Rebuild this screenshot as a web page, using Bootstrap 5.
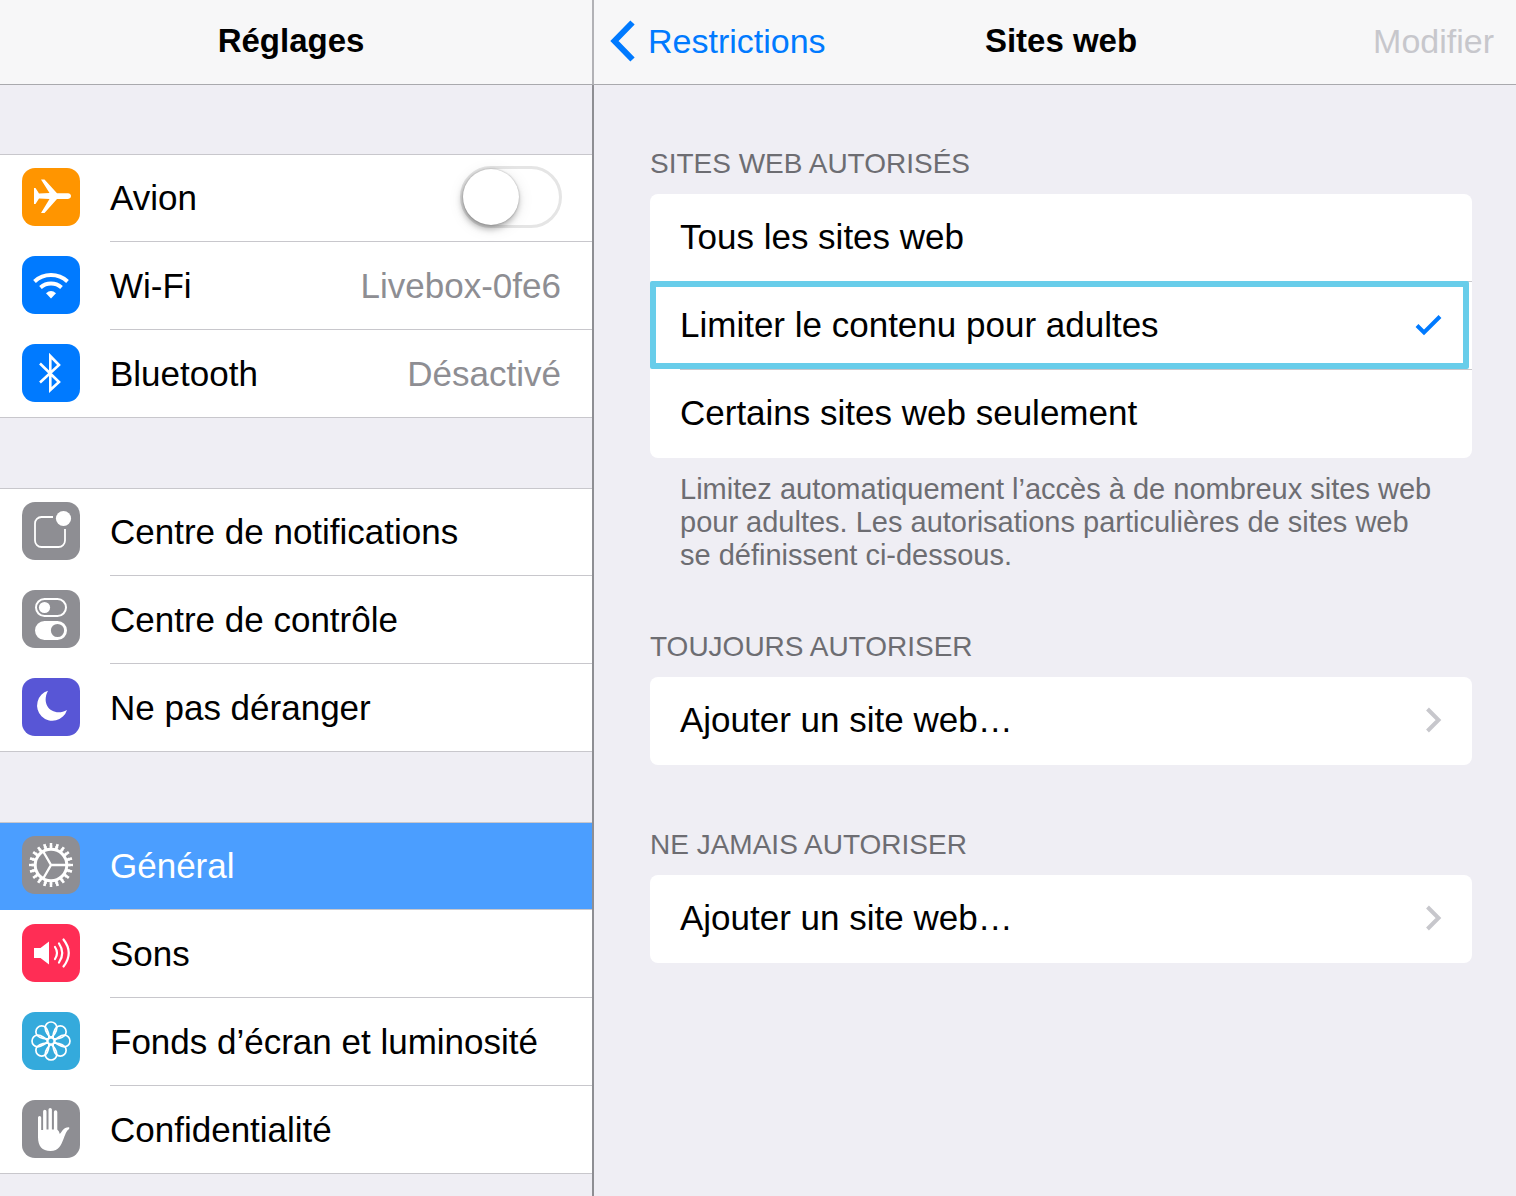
<!DOCTYPE html>
<html lang="fr">
<head>
<meta charset="utf-8">
<meta name="viewport" content="width=device-width, initial-scale=1">
<title>Réglages</title>
<link href="https://cdn.jsdelivr.net/npm/bootstrap@5.3.0/dist/css/bootstrap.min.css" rel="stylesheet">
<style>
  body { font-family: "Liberation Sans", Arial, sans-serif; font-size: 35px; line-height: 40px; color: #000; background: #efeef4; }
  a { text-decoration: none; }
  .split { min-height: 100vh; }
  .master { flex: 0 0 594px; border-right: 2px solid #8e8e93; }
  .topbar { height: 85px; padding-bottom: 3px; font-size: 34px; background: #f7f7f8; border-bottom: 1px solid #a9a9ad; }
  .topbar h1 { font-size: 33px; line-height: 40px; }
  .master .topbar { margin-right: -2px; border-right: 2px solid #b2b2b6; padding-right: 10px; }
  .detail .topbar { padding-left: 34px; padding-right: 22px; }
  .topbar .side { flex: 1 1 0; }
  .side a { color: #007aff; margin-left: -18px; }
  .side button, .side button:disabled { color: #c7c7cc; background: none; border: 0; padding: 0; }

  .groups { padding-top: 69px; gap: 70px; }
  .group { background: #fff; }
  .entry { height: 88px; padding-left: 22px; color: #000; }
  .entry .tile { flex: none; width: 58px; height: 58px; margin: 14px 30px 16px 0; border-radius: 13px; }
  .entry .text { padding: 0 31px 0 0; border-bottom: 1px solid #c8c7cc; }
  .entry:last-child { border-bottom: 1px solid #c8c7cc; }
  .entry:last-child .text { border-bottom: 0; }
  .entry:first-child { border-top: 1px solid #c8c7cc; }
  .entry:first-child .tile { margin-top: 13px; }
  .entry.current { background: #4b9eff; color: #fff; }
  .muted-value { color: #8e8e93; }
  .tile { color: #fff; }
  .t-orange { background: #ff9500; } .t-blue { background: #007aff; } .t-gray { background: #8e8e93; }
  .t-indigo { background: #5856d6; } .t-red { background: #ff2d55; } .t-cyan { background: #34aadc; }

  .ios-toggle { appearance: none; width: 102px; height: 62px; border: 3px solid #e5e5e5; border-radius: 31px; margin: 0 -1px 2px 0; background: #fff; }
  .ios-toggle::before { content: ""; display: block; width: 56px; height: 56px; border-radius: 50%; background: #fff; box-shadow: 0 0 2px rgba(0,0,0,.3), -1px 4px 6px rgba(0,0,0,.28), 0 3px 16px rgba(0,0,0,.1); }
  .ios-toggle:checked { background: #4cd964; border-color: #4cd964; }
  .ios-toggle:checked::before { margin-left: 40px; }

  .panel { padding: 59px 44px 40px 56px; }
  .caption { font-size: 28px; line-height: 40px; color: #6d6d72; margin: 0 0 10px; font-weight: 400; }
  .sheet { background: #fff; border-radius: 8px; }
  .choice { height: 88px; padding-left: 30px; color: #000; }
  .choice .text { padding: 0 30px 2px 0; border-bottom: 1px solid #c8c7cc; }
  .choice:last-child .text { border-bottom: 0; padding-bottom: 3px; }
  .choice .tick { visibility: hidden; }
  .btn-check:checked + .text .tick { visibility: visible; }
  .framed::after { content: ""; position: absolute; top: -1px; right: 3px; bottom: 1px; left: 0; border: 6px solid #68cdea; border-radius: 2px; pointer-events: none; }
  .note { font-size: 29px; line-height: 33px; color: #6d6d72; padding: 15px 30px 0; margin-bottom: 55px; }
  .spaced { margin-bottom: 60px; }
</style>
<script src="https://cdn.jsdelivr.net/npm/bootstrap@5.3.0/dist/js/bootstrap.bundle.min.js"></script>
</head>
<body>
<div class="split d-flex">

  <aside class="master">
    <header class="topbar d-flex align-items-center justify-content-center">
      <h1 class="fw-bold m-0">Réglages</h1>
    </header>
    <nav class="groups d-flex flex-column" aria-label="Réglages">
      <div class="group">
        <div class="entry d-flex">
          <svg class="tile t-orange" viewBox="0 0 58 58" fill="currentColor" aria-hidden="true"><path d="M12 20h1.500l3.500 5.500 10.500-.5L19 11.500h3.500L35 25.300h11c4 0 4 5.600 0 5.600H35L22.500 45H19l8.500-14-10.500-.5L13.500 36H12z"/></svg>
          <label class="text d-flex flex-grow-1 align-items-center justify-content-between"><span>Avion</span>
            <input class="ios-toggle" type="checkbox" role="switch"></label>
        </div>
        <a class="entry d-flex" href="#wifi">
          <svg class="tile t-blue" viewBox="0 0 58 58" fill="none" stroke="currentColor" stroke-width="4" aria-hidden="true"><path d="M12.500 25.500a24.500 24.500 0 0 1 33 0M18.500 31.500a16 16 0 0 1 21 0"/><path fill="currentColor" stroke="none" d="M29 42.500l-5-5.200q5-4.600 10 0z"/></svg>
          <span class="text d-flex flex-grow-1 align-items-center justify-content-between"><span>Wi-Fi</span><span class="muted-value">Livebox-0fe6</span></span>
        </a>
        <a class="entry d-flex" href="#bluetooth">
          <svg class="tile t-blue" viewBox="0 0 58 58" fill="none" stroke="currentColor" stroke-width="2.600" aria-hidden="true"><path d="M18 19.500l19 18.500-8.700 8V12l8.700 9-19 17.500"/></svg>
          <span class="text d-flex flex-grow-1 align-items-center justify-content-between"><span>Bluetooth</span><span class="muted-value">Désactivé</span></span>
        </a>
      </div>

      <div class="group">
        <a class="entry d-flex" href="#notifications">
          <svg class="tile t-gray" viewBox="0 0 58 58" aria-hidden="true"><path fill="none" stroke="currentColor" stroke-width="1.800" d="M31 15H19.500a6.500 6.500 0 0 0-6.500 6.500v17a6.500 6.500 0 0 0 6.500 6.500h17a6.500 6.500 0 0 0 6.500-6.500V27"/><circle cx="41.500" cy="16.500" r="7.600" fill="currentColor"/></svg>
          <span class="text d-flex flex-grow-1 align-items-center">Centre de notifications</span>
        </a>
        <a class="entry d-flex" href="#controle">
          <svg class="tile t-gray" viewBox="0 0 58 58" aria-hidden="true"><rect x="14" y="9" width="30" height="17" rx="8.500" fill="none" stroke="currentColor" stroke-width="2"/><circle cx="22.500" cy="17.500" r="5.600" fill="currentColor"/><path fill="currentColor" fill-rule="evenodd" d="M22.500 31h13a9.500 9.500 0 0 1 0 19h-13a9.500 9.500 0 0 1 0-19zM35.500 33.900a6.600 6.600 0 1 0 0 13.200 6.600 6.600 0 0 0 0-13.200z"/></svg>
          <span class="text d-flex flex-grow-1 align-items-center">Centre de contrôle</span>
        </a>
        <a class="entry d-flex" href="#nepasderanger">
          <svg class="tile t-indigo" viewBox="0 0 58 58" fill="currentColor" aria-hidden="true"><path d="M26 12.800a15.300 15.300 0 1 0 19 19.200C32 39.500 18 28 26 12.800z"/></svg>
          <span class="text d-flex flex-grow-1 align-items-center">Ne pas déranger</span>
        </a>
      </div>

      <div class="group">
        <a class="entry current d-flex" href="#general" aria-current="page">
          <svg class="tile t-gray" viewBox="0 0 58 58" fill="none" stroke="currentColor" aria-hidden="true"><circle cx="29" cy="29" r="15.800" stroke-width="3"/><circle cx="29" cy="29" r="18" stroke-width="3" pathLength="200" stroke-dasharray="5 5" stroke-dashoffset="2.500"/><circle cx="29" cy="29" r="20.300" stroke-width="3.400" pathLength="200" stroke-dasharray="4 6" stroke-dashoffset="2"/><path stroke-width="2.400" d="M29 29h15M29 29l-7.500-13M29 29l-7.500 13"/></svg>
          <span class="text d-flex flex-grow-1 align-items-center">Général</span>
        </a>
        <a class="entry d-flex" href="#sons">
          <svg class="tile t-red" viewBox="0 0 58 58" fill="none" stroke="currentColor" stroke-width="2.200" stroke-linecap="round" aria-hidden="true"><path fill="currentColor" stroke="none" d="M12 24h6.500L27 17.500v23L18.500 34H12z"/><path d="M33 23q4 6 0 12M37 19.500q6.500 9.500 0 19M41.500 15.500q10.500 13.500 0 27"/></svg>
          <span class="text d-flex flex-grow-1 align-items-center">Sons</span>
        </a>
        <a class="entry d-flex" href="#fonds">
          <svg class="tile t-cyan" viewBox="0 0 58 58" fill="none" stroke="currentColor" stroke-width="1.700" aria-hidden="true">
            <defs><path id="petal" d="M29 25.800C26.500 24 23.200 19.500 23.200 15.800a5.800 5.800 0 0 1 11.600 0C34.800 19.500 31.500 24 29 25.800z"/></defs>
            <circle cx="29" cy="29" r="3.400"/>
            <use href="#petal"/><use href="#petal" transform="rotate(45 29 29)"/><use href="#petal" transform="rotate(90 29 29)"/><use href="#petal" transform="rotate(135 29 29)"/><use href="#petal" transform="rotate(180 29 29)"/><use href="#petal" transform="rotate(225 29 29)"/><use href="#petal" transform="rotate(270 29 29)"/><use href="#petal" transform="rotate(315 29 29)"/>
          </svg>
          <span class="text d-flex flex-grow-1 align-items-center">Fonds d’écran et luminosité</span>
        </a>
        <a class="entry d-flex" href="#confidentialite">
          <svg class="tile t-gray" viewBox="0 0 58 58" fill="currentColor" aria-hidden="true"><path d="M16 17.500a1.600 1.600 0 0 1 3.200 0V30h1.900V11.500a1.700 1.700 0 0 1 3.400 0V29.500h2V9.600a1.700 1.700 0 0 1 3.400 0V29.500h2V11.900a1.700 1.700 0 0 1 3.400 0V29.500q2 1.500 2.500 4.500c2.500-2.500 3.500-7 9.400-6.700v1.600c-3.200 2-4 6-5.700 10.100-2.500 6-4.500 12-13 12C20 51 16 46 16 37z"/></svg>
          <span class="text d-flex flex-grow-1 align-items-center">Confidentialité</span>
        </a>
      </div>
    </nav>
  </aside>

  <main class="detail flex-grow-1">
    <header class="topbar d-flex align-items-center">
      <div class="side d-flex"><a class="d-flex align-items-center" href="#restrictions">
        <svg class="me-2" width="30" height="42" viewBox="0 0 30 42" fill="none" stroke="currentColor" stroke-width="6" aria-hidden="true"><path d="M22.500 2.500L4.500 21l18 18.500"/></svg>Restrictions</a></div>
      <h1 class="fw-bold m-0">Sites web</h1>
      <div class="side text-end"><button type="button" disabled>Modifier</button></div>
    </header>

    <div class="panel">
      <h2 class="caption" id="autorises">SITES WEB AUTORISÉS</h2>
      <div class="sheet" role="radiogroup" aria-labelledby="autorises">
        <label class="choice d-flex">
          <input class="btn-check" type="radio" name="sites">
          <span class="text d-flex flex-grow-1 align-items-center">Tous les sites web</span>
        </label>
        <label class="choice framed position-relative d-flex">
          <input class="btn-check" type="radio" name="sites" checked>
          <span class="text d-flex flex-grow-1 align-items-center justify-content-between">Limiter le contenu pour adultes
            <svg class="tick" width="27" height="22" viewBox="0 0 27 22" fill="none" stroke="#007aff" stroke-width="4" aria-hidden="true"><path d="M2 11.500l7 7L25 2.500"/></svg></span>
        </label>
        <label class="choice d-flex">
          <input class="btn-check" type="radio" name="sites">
          <span class="text d-flex flex-grow-1 align-items-center">Certains sites web seulement</span>
        </label>
      </div>
      <p class="note">Limitez automatiquement l’accès à de nombreux sites web pour adultes. Les autorisations particulières de sites web se définissent ci-dessous.</p>

      <h2 class="caption">TOUJOURS AUTORISER</h2>
      <div class="sheet spaced">
        <a class="choice d-flex" href="#toujours"><span class="text d-flex flex-grow-1 align-items-center justify-content-between">Ajouter un site web…
          <svg width="17" height="26" viewBox="0 0 17 26" fill="none" stroke="#c7c7cc" stroke-width="4" aria-hidden="true"><path d="M2.500 2L13.500 13l-11 11"/></svg></span></a>
      </div>

      <h2 class="caption">NE JAMAIS AUTORISER</h2>
      <div class="sheet">
        <a class="choice d-flex" href="#jamais"><span class="text d-flex flex-grow-1 align-items-center justify-content-between">Ajouter un site web…
          <svg width="17" height="26" viewBox="0 0 17 26" fill="none" stroke="#c7c7cc" stroke-width="4" aria-hidden="true"><path d="M2.500 2L13.500 13l-11 11"/></svg></span></a>
      </div>
    </div>
  </main>
</div>
</body>
</html>
